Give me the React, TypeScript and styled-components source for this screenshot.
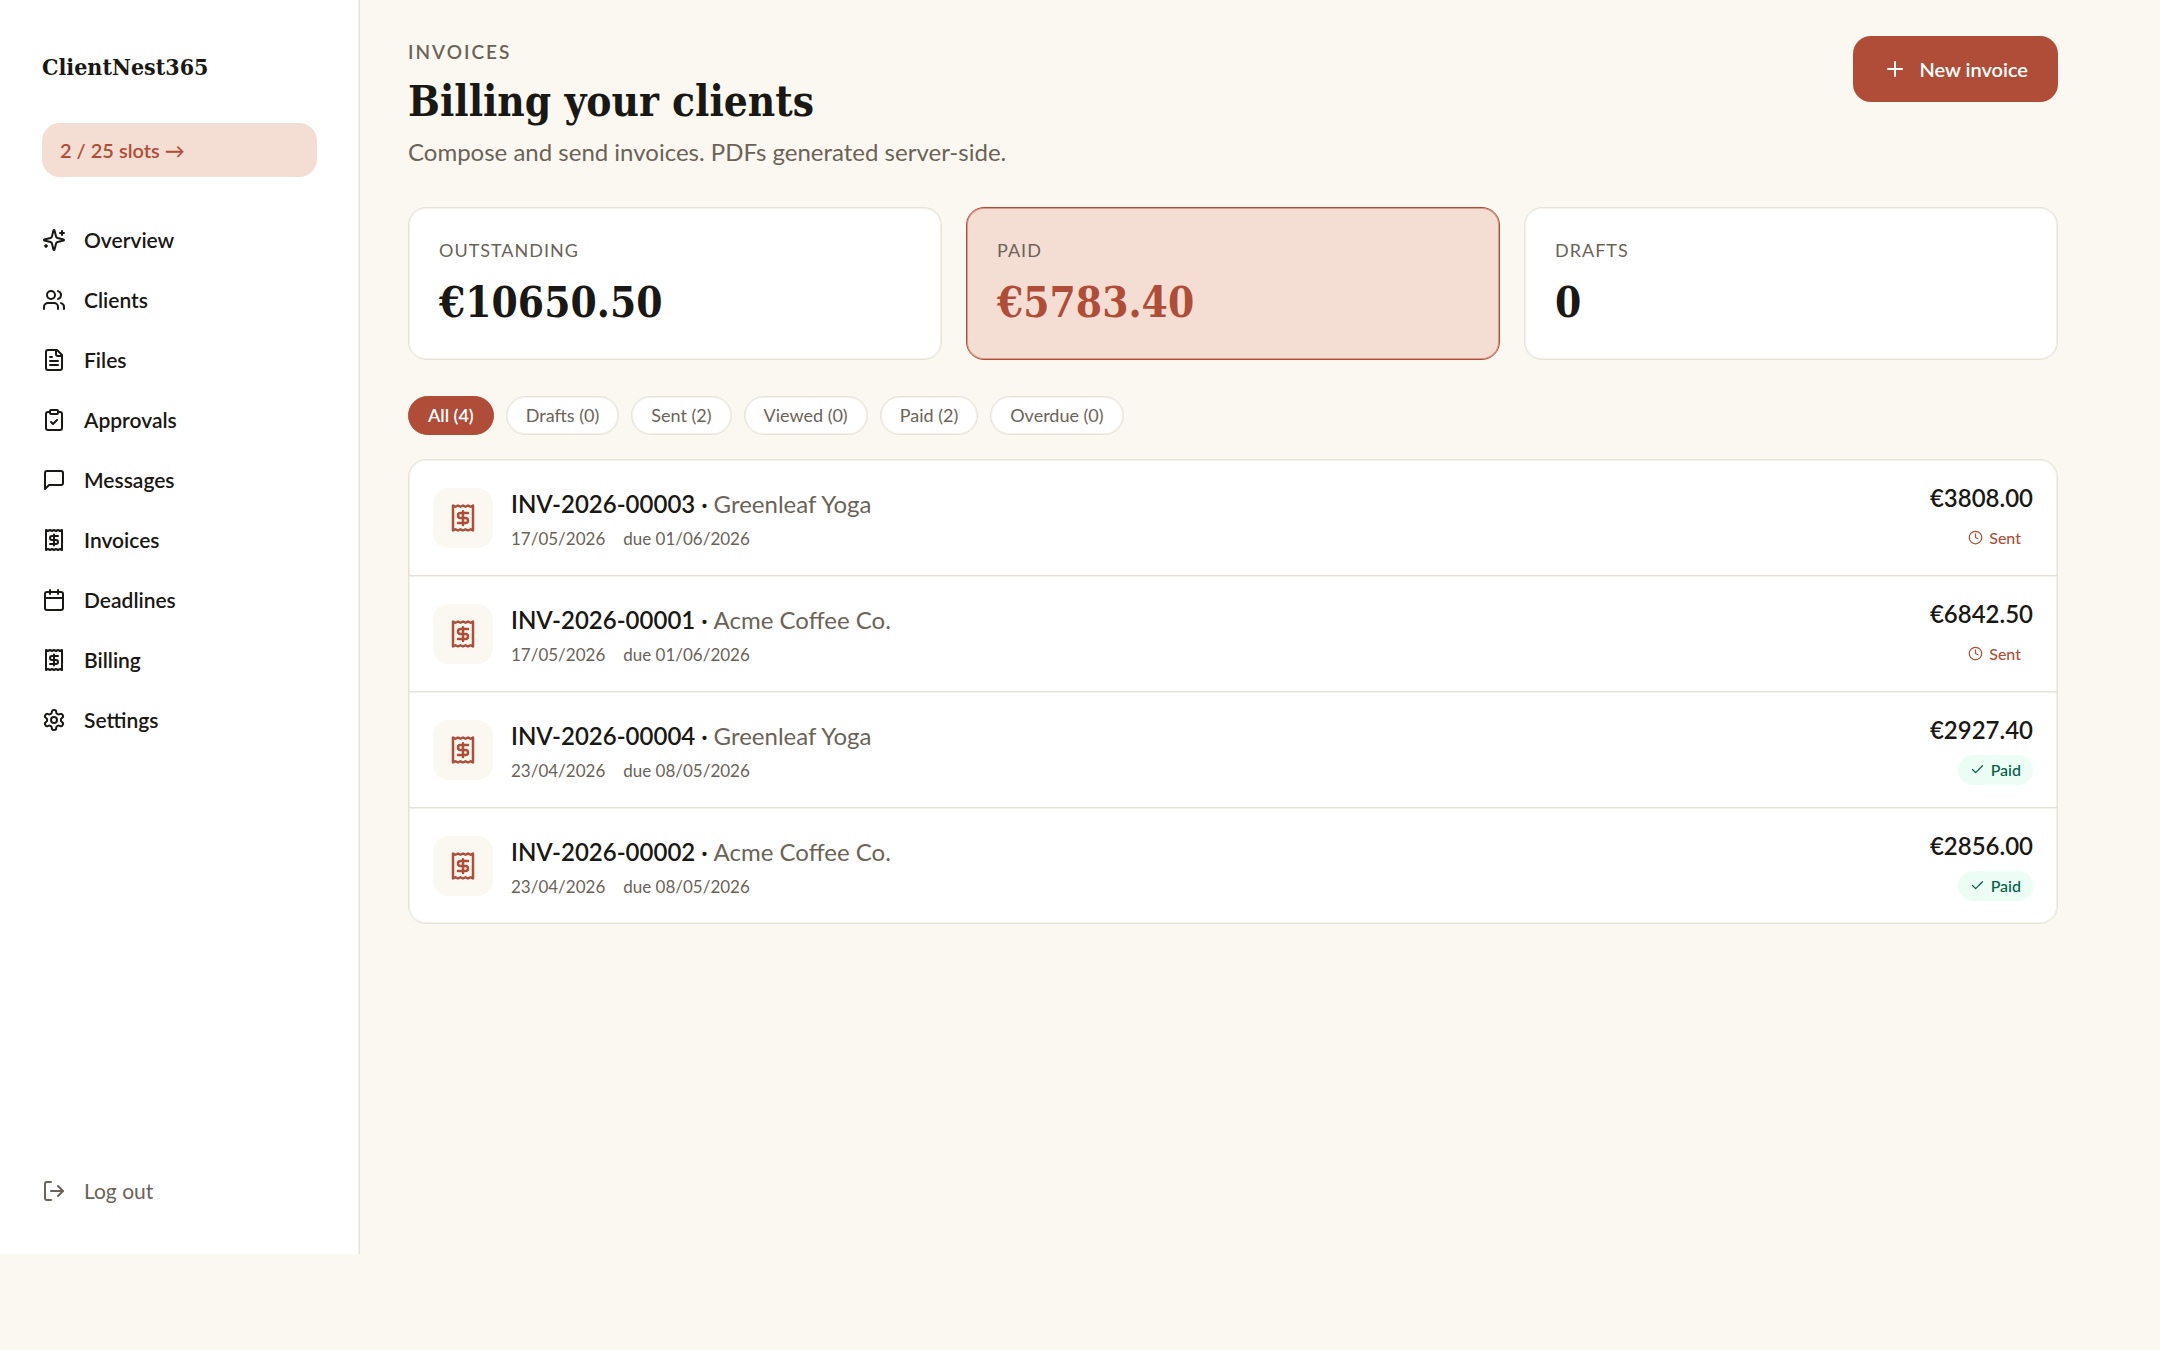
import React from "react";
import styled, { createGlobalStyle, css } from "styled-components";
import { Calendar, Check, Clock, LogOut, Plus } from "lucide-react";

const c = {
  page: "#fbf8f1",
  surface: "#ffffff",
  ink: "#1a1814",
  muted: "#6b6358",
  line: "#e8e2d6",
  lineSoft: "#f4f1eb",
  accent: "#b04d38",
  accentSoft: "#f4ddd3",
  accentMid: "#d69c8c",
  paid: "#065f46",
  paidSoft: "#ecfdf5",
};
const serif = `"DejaVu Serif Condensed", "Liberation Serif", serif`;

const GlobalStyle = createGlobalStyle`
  *, *::before, *::after { box-sizing: border-box; }
  body {
    margin: 0;
    background: ${c.page};
    color: ${c.ink};
    font-family: Lato, "Open Sans", sans-serif;
  }
  h1, p, ul { margin: 0; padding: 0; }
  ul { list-style: none; }
  button { font: inherit; border: 0; cursor: pointer; }
  a { color: inherit; text-decoration: none; }
  svg { flex: none; display: block; }
`;

/* ---------- icons ---------- */

const Glyph = ({ size = 24, children }: { size?: number; children: React.ReactNode }) => (
  <svg
    width={size}
    height={size}
    viewBox="0 0 24 24"
    fill="none"
    stroke="currentColor"
    strokeWidth={2}
    strokeLinecap="round"
    strokeLinejoin="round"
    aria-hidden="true"
  >
    {children}
  </svg>
);

const SparklesIcon = () => (
  <Glyph>
    <path d="M9.937 15.5A2 2 0 0 0 8.5 14.063l-6.135-1.582a.5.5 0 0 1 0-.962L8.5 9.936A2 2 0 0 0 9.937 8.5l1.582-6.135a.5.5 0 0 1 .963 0L14.063 8.5A2 2 0 0 0 15.5 9.937l6.135 1.581a.5.5 0 0 1 0 .964L15.5 14.063a2 2 0 0 0-1.437 1.437l-1.582 6.135a.5.5 0 0 1-.963 0z" />
    <path d="M20 3v4M22 5h-4M4 17v2M5 18H3" />
  </Glyph>
);
const UsersIcon = () => (
  <Glyph>
    <path d="M16 21v-2a4 4 0 0 0-4-4H6a4 4 0 0 0-4 4v2" />
    <circle cx="9" cy="7" r="4" />
    <path d="M22 21v-2a4 4 0 0 0-3-3.87M16 3.13a4 4 0 0 1 0 7.75" />
  </Glyph>
);
const FileIcon = () => (
  <Glyph>
    <path d="M15 2H6a2 2 0 0 0-2 2v16a2 2 0 0 0 2 2h12a2 2 0 0 0 2-2V7Z" />
    <path d="M14 2v4a2 2 0 0 0 2 2h4M10 9H8M16 13H8M16 17H8" />
  </Glyph>
);
const ClipboardIcon = () => (
  <Glyph>
    <rect x="8" y="2" width="8" height="4" rx="1" />
    <path d="M16 4h2a2 2 0 0 1 2 2v14a2 2 0 0 1-2 2H6a2 2 0 0 1-2-2V6a2 2 0 0 1 2-2h2" />
    <path d="m9 14 2 2 4-4" />
  </Glyph>
);
const MessageIcon = () => (
  <Glyph>
    <path d="M21 15a2 2 0 0 1-2 2H7l-4 4V5a2 2 0 0 1 2-2h14a2 2 0 0 1 2 2z" />
  </Glyph>
);
const ReceiptIcon = ({ size }: { size?: number }) => (
  <Glyph size={size}>
    <path d="M4 2v20l2-1 2 1 2-1 2 1 2-1 2 1 2-1 2 1V2l-2 1-2-1-2 1-2-1-2 1-2-1-2 1Z" />
    <path d="M16 8h-6a2 2 0 1 0 0 4h4a2 2 0 1 1 0 4H8M12 17.5v-11" />
  </Glyph>
);
const SettingsIcon = () => (
  <Glyph>
    <path d="M12.22 2h-.44a2 2 0 0 0-2 2v.18a2 2 0 0 1-1 1.73l-.43.25a2 2 0 0 1-2 0l-.15-.08a2 2 0 0 0-2.73.73l-.22.38a2 2 0 0 0 .73 2.73l.15.1a2 2 0 0 1 1 1.72v.51a2 2 0 0 1-1 1.74l-.15.09a2 2 0 0 0-.73 2.73l.22.38a2 2 0 0 0 2.73.73l.15-.08a2 2 0 0 1 2 0l.43.25a2 2 0 0 1 1 1.73V20a2 2 0 0 0 2 2h.44a2 2 0 0 0 2-2v-.18a2 2 0 0 1 1-1.73l.43-.25a2 2 0 0 1 2 0l.15.08a2 2 0 0 0 2.73-.73l.22-.39a2 2 0 0 0-.73-2.73l-.15-.08a2 2 0 0 1-1-1.74v-.5a2 2 0 0 1 1-1.74l.15-.09a2 2 0 0 0 .73-2.73l-.22-.38a2 2 0 0 0-2.73-.73l-.15.08a2 2 0 0 1-2 0l-.43-.25a2 2 0 0 1-1-1.73V4a2 2 0 0 0-2-2z" />
    <circle cx="12" cy="12" r="3" />
  </Glyph>
);

/* ---------- sidebar ---------- */

const Shell = styled.div`
  display: flex;
  align-items: flex-start;
  min-height: 100vh;
`;
const Sidebar = styled.aside`
  display: flex;
  flex-direction: column;
  flex: none;
  width: 360px;
  min-height: calc(100vh - 96px);
  padding: 50px 42px 33px;
  background: ${c.surface};
  border-right: 1px solid ${c.line};
  box-shadow: inset -1px 0 0 ${c.lineSoft};
`;
const Brand = styled.a`
  margin-bottom: 39px;
  font: 700 23px/34px ${serif};
`;
const Slots = styled.a`
  margin-bottom: 33px;
  padding: 12px 18px;
  border-radius: 18px;
  background: ${c.accentSoft};
  color: ${c.accent};
  font-size: 20px;
  font-weight: 600;
  line-height: 30px;
`;
const navItem = css`
  display: flex;
  align-items: center;
  gap: 18px;
  height: 60px;
  font-size: 21px;
  line-height: 30px;
`;
const NavLink = styled.a`
  ${navItem}
  font-weight: 600;
`;
const LogoutButton = styled.button`
  ${navItem}
  margin-top: auto;
  padding: 0;
  background: none;
  color: ${c.muted};
`;

/* ---------- page header ---------- */

const Main = styled.main`
  flex: 1;
  min-width: 0;
  padding: 36px 48px;
`;
const Content = styled.div`
  max-width: 1650px;
`;
const Header = styled.header`
  display: flex;
  align-items: flex-start;
  justify-content: space-between;
  gap: 24px;
  margin-bottom: 36px;
`;
const Eyebrow = styled.p`
  margin-bottom: 4px;
  color: ${c.muted};
  font-size: 19px;
  font-weight: 600;
  line-height: 32px;
  letter-spacing: 2px;
  text-transform: uppercase;
`;
const Title = styled.h1`
  font: 700 42px/60px ${serif};
`;
const Subtitle = styled.p`
  color: ${c.muted};
  font-size: 24px;
  line-height: 39px;
`;
const PrimaryButton = styled.button`
  display: flex;
  align-items: center;
  gap: 12px;
  padding: 18px 30px;
  border-radius: 18px;
  background: ${c.accent};
  color: #fff;
  font-size: 20px;
  font-weight: 600;
  line-height: 30px;
  white-space: nowrap;
`;

/* ---------- summary cards ---------- */

const Stats = styled.section`
  display: grid;
  grid-template-columns: repeat(3, 1fr);
  gap: 24px;
  margin-bottom: 36px;
`;
const StatCard = styled.div<{ $active?: boolean }>`
  padding: 28px 30px;
  border: 1px solid ${(p) => (p.$active ? c.accent : c.line)};
  border-radius: 18px;
  box-shadow: inset 0 0 0 1px ${(p) => (p.$active ? c.accentMid : c.lineSoft)};
  background: ${(p) => (p.$active ? c.accentSoft : c.surface)};
  color: ${(p) => (p.$active ? c.accent : c.ink)};
`;
const StatLabel = styled.p`
  margin-bottom: 11px;
  color: ${c.muted};
  font-size: 18px;
  line-height: 28px;
  letter-spacing: 1px;
  text-transform: uppercase;
`;
const StatValue = styled.p`
  font: 700 42px/56px ${serif};
`;

/* ---------- filters ---------- */

const Filters = styled.div`
  display: flex;
  flex-wrap: wrap;
  gap: 12px;
  margin-bottom: 24px;
`;
const FilterPill = styled.button<{ $active: boolean }>`
  padding: 5px 19px;
  border: 1px solid ${(p) => (p.$active ? c.accent : c.line)};
  border-radius: 20px;
  box-shadow: inset 0 0 0 1px ${(p) => (p.$active ? c.accent : c.lineSoft)};
  background: ${(p) => (p.$active ? c.accent : c.surface)};
  color: ${(p) => (p.$active ? "#fff" : c.muted)};
  font-size: 18px;
  font-weight: ${(p) => (p.$active ? 600 : 400)};
  line-height: 27px;
`;

/* ---------- invoice list ---------- */

const InvoiceList = styled.ul`
  border: 1px solid ${c.line};
  border-radius: 18px;
  box-shadow: inset 0 0 0 1px ${c.lineSoft};
  background: ${c.surface};
`;
const InvoiceItem = styled.li`
  & + & {
    border-top: 1px solid ${c.line};
    box-shadow: inset 0 1px 0 ${c.lineSoft};
  }
`;
const InvoiceRow = styled.a`
  display: flex;
  align-items: center;
  gap: 18px;
  min-height: 115px;
  padding: 20px 24px;
`;
const InvoiceBadge = styled.span`
  display: grid;
  place-items: center;
  flex: none;
  width: 60px;
  height: 60px;
  border-radius: 16px;
  background: ${c.page};
  color: ${c.accent};
`;
const InvoiceText = styled.div`
  flex: 1;
  min-width: 0;
`;
const InvoiceTitle = styled.p`
  margin-bottom: 4px;
  font-size: 24px;
  font-weight: 600;
  line-height: 37px;
`;
const ClientName = styled.span`
  color: ${c.muted};
  font-weight: 400;
`;
const InvoiceDates = styled.p`
  display: flex;
  gap: 18px;
  color: ${c.muted};
  font-size: 17px;
  line-height: 25px;
`;
const InvoiceSide = styled.div`
  display: flex;
  flex-direction: column;
  align-items: flex-end;
  gap: 10px;
`;
const Amount = styled.span`
  font-size: 24px;
  font-weight: 600;
  line-height: 30px;
`;
const Status = styled.span<{ $paid: boolean }>`
  display: flex;
  align-items: center;
  gap: 6px;
  padding: 3px 12px;
  border-radius: 15px;
  background: ${(p) => (p.$paid ? c.paidSoft : c.surface)};
  color: ${(p) => (p.$paid ? c.paid : c.accent)};
  font-size: 16px;
  font-weight: 500;
  line-height: 24px;
`;

const nav = [
  { label: "Overview", icon: <SparklesIcon /> },
  { label: "Clients", icon: <UsersIcon /> },
  { label: "Files", icon: <FileIcon /> },
  { label: "Approvals", icon: <ClipboardIcon /> },
  { label: "Messages", icon: <MessageIcon /> },
  { label: "Invoices", icon: <ReceiptIcon /> },
  { label: "Deadlines", icon: <Calendar size={24} strokeWidth={2} /> },
  { label: "Billing", icon: <ReceiptIcon /> },
  { label: "Settings", icon: <SettingsIcon /> },
];

const stats = [
  { label: "Outstanding", value: "€10650.50" },
  { label: "Paid", value: "€5783.40", active: true },
  { label: "Drafts", value: "0" },
];

const filters = ["All (4)", "Drafts (0)", "Sent (2)", "Viewed (0)", "Paid (2)", "Overdue (0)"];

const invoices = [
  { no: "INV-2026-00003", client: "Greenleaf Yoga", date: "17/05/2026", due: "01/06/2026", amount: "€3808.00", paid: false },
  { no: "INV-2026-00001", client: "Acme Coffee Co.", date: "17/05/2026", due: "01/06/2026", amount: "€6842.50", paid: false },
  { no: "INV-2026-00004", client: "Greenleaf Yoga", date: "23/04/2026", due: "08/05/2026", amount: "€2927.40", paid: true },
  { no: "INV-2026-00002", client: "Acme Coffee Co.", date: "23/04/2026", due: "08/05/2026", amount: "€2856.00", paid: true },
];

export default function App() {
  const [filter, setFilter] = React.useState(filters[0]);
  return (
    <>
      <GlobalStyle />
      <Shell>
        <Sidebar>
          <Brand href="#">ClientNest365</Brand>
          <Slots href="#slots">2 / 25 slots →</Slots>
          <nav>
            {nav.map((n) => (
              <NavLink key={n.label} href={`#${n.label.toLowerCase()}`}>
                {n.icon}
                {n.label}
              </NavLink>
            ))}
          </nav>
          <LogoutButton type="button">
            <LogOut size={24} strokeWidth={2} />
            Log out
          </LogoutButton>
        </Sidebar>
        <Main>
          <Content>
            <Header>
              <div>
                <Eyebrow>Invoices</Eyebrow>
                <Title>Billing your clients</Title>
                <Subtitle>Compose and send invoices. PDFs generated server-side.</Subtitle>
              </div>
              <PrimaryButton type="button">
                <Plus size={24} strokeWidth={2} />
                New invoice
              </PrimaryButton>
            </Header>
            <Stats>
              {stats.map((s) => (
                <StatCard key={s.label} $active={s.active}>
                  <StatLabel>{s.label}</StatLabel>
                  <StatValue>{s.value}</StatValue>
                </StatCard>
              ))}
            </Stats>
            <Filters>
              {filters.map((f) => (
                <FilterPill key={f} type="button" $active={f === filter} onClick={() => setFilter(f)}>
                  {f}
                </FilterPill>
              ))}
            </Filters>
            <InvoiceList>
              {invoices.map((i) => (
                <InvoiceItem key={i.no}>
                  <InvoiceRow href={`#${i.no}`}>
                    <InvoiceBadge>
                      <ReceiptIcon size={30} />
                    </InvoiceBadge>
                    <InvoiceText>
                      <InvoiceTitle>
                        {i.no} · <ClientName>{i.client}</ClientName>
                      </InvoiceTitle>
                      <InvoiceDates>
                        <span>{i.date}</span>
                        <span>due {i.due}</span>
                      </InvoiceDates>
                    </InvoiceText>
                    <InvoiceSide>
                      <Amount>{i.amount}</Amount>
                      <Status $paid={i.paid}>
                        {i.paid ? <Check size={15} strokeWidth={2} /> : <Clock size={15} strokeWidth={2} />}
                        {i.paid ? "Paid" : "Sent"}
                      </Status>
                    </InvoiceSide>
                  </InvoiceRow>
                </InvoiceItem>
              ))}
            </InvoiceList>
          </Content>
        </Main>
      </Shell>
    </>
  );
}
